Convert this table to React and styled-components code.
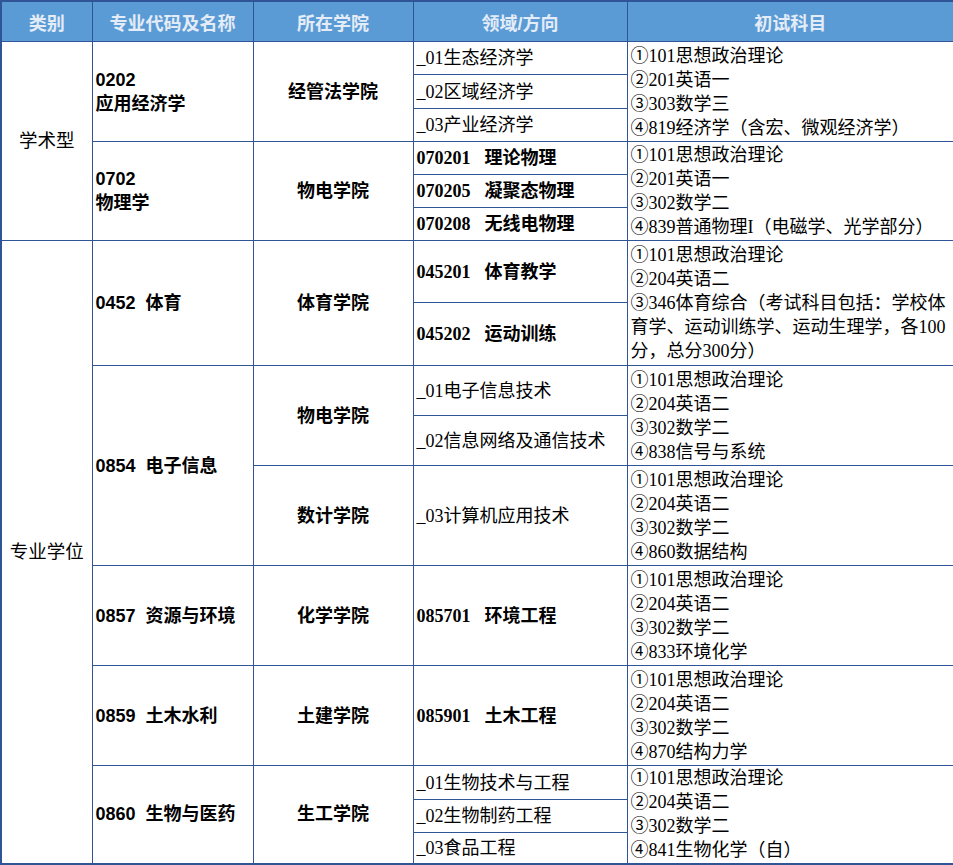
import React from 'react';
import styled, { createGlobalStyle, css } from 'styled-components';

const serif = `"Liberation Serif", "Noto Sans CJK SC", serif`;
const sans = `"Liberation Sans", "Noto Sans CJK SC", sans-serif`;
const line = '#2f5597';

const GlobalStyle = createGlobalStyle`
  html, body {
    margin: 0;
    padding: 0;
    background: #ffffff;
  }
  body {
    font-family: ${sans};
    color: #000000;
  }
`;

const StyledTable = styled.table`
  width: 953px;
  table-layout: fixed;
  border-collapse: collapse;
  border: 2px solid ${line};
  font-size: 18px;
`;

const HeadCell = styled.th`
  height: 39px;
  padding: 0;
  background-color: #5b9bd5;
  color: #e3ecf7;
  font-family: ${sans};
  font-weight: 700;
  font-size: 18px;
  text-align: center;
  vertical-align: middle;
  border: 1px solid ${line};
`;

const Row = styled.tr`
  height: ${props => props.$h}px;
`;

const Cell = styled.td`
  padding: 0 3px;
  border: 1px solid ${line};
  vertical-align: middle;
  text-align: left;
  line-height: 24px;
  font-family: ${serif};
  font-weight: 400;
  white-space: pre-wrap;

  ${props => props.$center && css`
    text-align: center;
  `}

  ${props => props.$kind === 'type' && css`
    font-family: ${sans};
    font-size: 18.5px;
  `}

  ${props => props.$kind === 'major' && css`
    font-family: ${sans};
    font-weight: 700;
  `}

  ${props => props.$kind === 'field' && css`
    font-weight: 700;
  `}
`;

const Code = styled.span`
  margin-right: 14px;
`;

const Subject = styled.div`
  line-height: 24px;
`;

function Subjects({ items }) {
  return items.map((item) => <Subject key={item}>{item}</Subject>);
}

const common = ['①101思想政治理论', '②204英语二', '③302数学二'];

function Field({ code, name }) {
  return (
    <Cell $kind="field">
      <Code>{code}</Code>
      {name}
    </Cell>
  );
}

export default function App() {
  return (
    <>
      <GlobalStyle />
      <StyledTable>
        <colgroup>
          <col style={{ width: 91 }} />
          <col style={{ width: 161 }} />
          <col style={{ width: 160 }} />
          <col style={{ width: 214 }} />
          <col style={{ width: 327 }} />
        </colgroup>
        <thead>
          <tr>
            <HeadCell>类别</HeadCell>
            <HeadCell>专业代码及名称</HeadCell>
            <HeadCell>所在学院</HeadCell>
            <HeadCell>领域/方向</HeadCell>
            <HeadCell>初试科目</HeadCell>
          </tr>
        </thead>
        <tbody>
          <Row $h={33}>
            <Cell $kind="type" $center rowSpan={6}>学术型</Cell>
            <Cell $kind="major" rowSpan={3}>0202{'\n'}应用经济学</Cell>
            <Cell $kind="major" $center rowSpan={3}>经管法学院</Cell>
            <Cell>_01生态经济学</Cell>
            <Cell rowSpan={3}>
              <Subjects items={['①101思想政治理论', '②201英语一', '③303数学三', '④819经济学（含宏、微观经济学）']} />
            </Cell>
          </Row>
          <Row $h={34}>
            <Cell>_02区域经济学</Cell>
          </Row>
          <Row $h={33}>
            <Cell>_03产业经济学</Cell>
          </Row>

          <Row $h={33}>
            <Cell $kind="major" rowSpan={3}>0702{'\n'}物理学</Cell>
            <Cell $kind="major" $center rowSpan={3}>物电学院</Cell>
            <Field code="070201" name="理论物理" />
            <Cell rowSpan={3}>
              <Subjects items={['①101思想政治理论', '②201英语一', '③302数学二', '④839普通物理I（电磁学、光学部分）']} />
            </Cell>
          </Row>
          <Row $h={33}>
            <Field code="070205" name="凝聚态物理" />
          </Row>
          <Row $h={33}>
            <Field code="070208" name="无线电物理" />
          </Row>

          <Row $h={62}>
            <Cell $kind="type" $center rowSpan={10}>专业学位</Cell>
            <Cell $kind="major" rowSpan={2}>0452  体育</Cell>
            <Cell $kind="major" $center rowSpan={2}>体育学院</Cell>
            <Field code="045201" name="体育教学" />
            <Cell rowSpan={2}>
              <Subjects items={['①101思想政治理论', '②204英语二', '③346体育综合（考试科目包括：学校体育学、运动训练学、运动生理学，各100分，总分300分）']} />
            </Cell>
          </Row>
          <Row $h={63}>
            <Field code="045202" name="运动训练" />
          </Row>

          <Row $h={50}>
            <Cell $kind="major" rowSpan={3}>0854  电子信息</Cell>
            <Cell $kind="major" $center rowSpan={2}>物电学院</Cell>
            <Cell>_01电子信息技术</Cell>
            <Cell rowSpan={2}>
              <Subjects items={[...common, '④838信号与系统']} />
            </Cell>
          </Row>
          <Row $h={50}>
            <Cell>_02信息网络及通信技术</Cell>
          </Row>
          <Row $h={100}>
            <Cell $kind="major" $center>数计学院</Cell>
            <Cell>_03计算机应用技术</Cell>
            <Cell>
              <Subjects items={[...common, '④860数据结构']} />
            </Cell>
          </Row>

          <Row $h={100}>
            <Cell $kind="major">0857  资源与环境</Cell>
            <Cell $kind="major" $center>化学学院</Cell>
            <Field code="085701" name="环境工程" />
            <Cell>
              <Subjects items={[...common, '④833环境化学']} />
            </Cell>
          </Row>

          <Row $h={100}>
            <Cell $kind="major">0859  土木水利</Cell>
            <Cell $kind="major" $center>土建学院</Cell>
            <Field code="085901" name="土木工程" />
            <Cell>
              <Subjects items={[...common, '④870结构力学']} />
            </Cell>
          </Row>

          <Row $h={34}>
            <Cell $kind="major" rowSpan={3}>0860  生物与医药</Cell>
            <Cell $kind="major" $center rowSpan={3}>生工学院</Cell>
            <Cell>_01生物技术与工程</Cell>
            <Cell rowSpan={3}>
              <Subjects items={[...common, '④841生物化学（自）']} />
            </Cell>
          </Row>
          <Row $h={33}>
            <Cell>_02生物制药工程</Cell>
          </Row>
          <Row $h={31}>
            <Cell>_03食品工程</Cell>
          </Row>
        </tbody>
      </StyledTable>
    </>
  );
}
